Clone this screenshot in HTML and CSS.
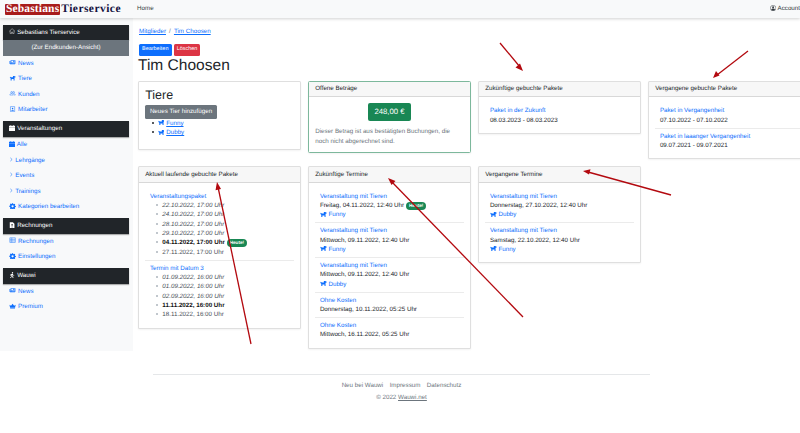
FILE: index.html
```html
<!DOCTYPE html>
<html lang="de">
<head>
<meta charset="utf-8">
<title>Tim Choosen</title>
<link rel="stylesheet" href="styles.css">
</head>
<body>
<svg class="defs" width="0" height="0" aria-hidden="true">
  <symbol id="dog" viewBox="0 0 16 16"><path d="M.8 5 2.100 4.200C2.600 5.600 3.400 6 5 6h4V2.500h4l.8 1.200h2v2l-2 1H13v7.300h-2.400v-3.500h-5V14H3V8.600C1.800 8 1 6.600.8 5Z"/></symbol>
  <symbol id="news" viewBox="0 0 16 16"><path d="M3 3h12.200v8.800a1.600 1.600 0 0 1-1.600 1.600H2a1.800 1.800 0 0 1-1.800-1.800V5.200h1.900V11a.45.45 0 0 0 .9 0Z"/><path fill="#f8f9fa" d="M4.800 4.600h4.500v3.200H4.800Zm5.800.2h3.300V6h-3.300Zm0 2h3.300V8h-3.300Zm-5.800 2.500h9.100v1.100H4.800Zm0 2h9.100v.9H4.800Z"/></symbol>
  <symbol id="people" viewBox="0 0 16 16"><g fill="none" stroke="currentColor" stroke-width="1.100"><circle cx="5.500" cy="6" r="2.200"/><circle cx="10.800" cy="6" r="2.200"/><path d="M1 13c.4-3 2-4 4.500-4s3.800 1 4 4Zm9-3.800c2.600-.4 4.600.9 5 3.800h-4"/></g></symbol>
  <symbol id="badge" viewBox="0 0 16 16"><path fill="none" stroke="currentColor" stroke-width="1.200" d="M2.600 1.600h10.800v12.800H2.600Z"/><circle cx="8" cy="6.500" r="2"/><path d="M4.500 12.400c.3-2 1.500-3 3.500-3s3.200 1 3.500 3Z"/></symbol>
  <symbol id="house" viewBox="0 0 16 16"><path fill="none" stroke="currentColor" stroke-width="1.100" d="M1 8.300 8 1.700l7 6.600M3 6.500v7.800h3.600v-4h2.800v4H13V6.500"/></symbol>
  <symbol id="cal" viewBox="0 0 16 16"><path d="M3.500.5h2V2h5V.5h2V2H16v3H0V2h3.500ZM0 6h16v8.500a1 1 0 0 1-1 1H1a1 1 0 0 1-1-1Z"/></symbol>
  <symbol id="chev" viewBox="0 0 16 16"><path fill="none" stroke="currentColor" stroke-width="2" d="m5 2 6.500 6L5 14"/></symbol>
  <symbol id="gear" viewBox="0 0 16 16"><path fill-rule="evenodd" d="M6.600.5h2.800l.4 2.100 1.300.6 1.800-1.200 2 2-1.200 1.800.6 1.300 2.100.4v2.800l-2.100.4-.6 1.300 1.200 1.800-2 2-1.800-1.200-1.300.6-.4 2.100H6.600l-.4-2.100-1.300-.6-1.800 1.200-2-2 1.200-1.800-.6-1.300L-.4 9.800V7l2.100-.4.6-1.300L1.100 3.500l2-2 1.800 1.200 1.300-.6ZM8 5.500a2.900 2.900 0 1 0 0 5.800 2.900 2.900 0 0 0 0-5.800Z"/></symbol>
  <symbol id="file" viewBox="0 0 16 16"><path fill-rule="evenodd" d="M2 .5h8l4 4v11H2Zm4 5.500h4v1.500H6Zm0 3h4v1.500H6Zm0 3h4v1.500H6Z"/></symbol>
  <symbol id="table" viewBox="0 0 16 16"><path fill="none" stroke="currentColor" stroke-width="1.200" d="M1 2h14v12H1Zm0 4h14M1 10h14M6 2v12"/></symbol>
  <symbol id="walk" viewBox="0 0 16 16"><circle cx="9" cy="2" r="1.800"/><path d="M7.400 4.400h2.900l.7 3 2.700 1.200-.6 1.300-3.300-1.400-.4-1.200-.6 2.900 2.400 2.300v3.200H9.200v-2.500L7 10.600l-.8 3.200-3 1.900-.8-1.300 2.500-1.600 1.300-6-1.400.6-.6 2.400-1.400-.3.800-3.200Z"/></symbol>
  <symbol id="crown" viewBox="0 0 16 16"><path d="M0 4.500 4 7.300 8 2l4 5.300 4-2.800-1.600 8H1.600ZM1.800 13.500h12.400V15H1.800Z"/></symbol>
  <symbol id="user" viewBox="0 0 16 16"><circle cx="8" cy="8" r="7.200" fill="none" stroke="currentColor" stroke-width="1.200"/><circle cx="8" cy="5.800" r="2.500"/><path d="M3.200 12.300c.6-2.200 2.400-3 4.800-3s4.200.8 4.800 3A6.500 6.500 0 0 1 8 14.500a6.500 6.500 0 0 1-4.800-2.200Z"/></symbol>
</svg>

<nav class="navbar">
  <div class="logo"><span class="logo-a">Sebastians</span><span class="logo-b">Tierservice</span></div>
  <a class="nav-home">Home</a>
  <a class="nav-account"><svg class="ic"><use href="#user"/></svg> Account</a>
</nav>

<div class="layout">
  <aside class="sidebar">
    <div class="side-head"><svg class="ic"><use href="#house"/></svg> Sebastians Tierservice</div>
    <div class="side-sub">(Zur Endkunden-Ansicht)</div>
    <a class="side-item"><svg class="ic wide"><use href="#news"/></svg> News</a>
    <a class="side-item"><svg class="ic wide"><use href="#dog"/></svg> Tiere</a>
    <a class="side-item"><svg class="ic wide"><use href="#people"/></svg> Kunden</a>
    <a class="side-item"><svg class="ic wide"><use href="#badge"/></svg> Mitarbeiter</a>

    <div class="side-head gap"><svg class="ic"><use href="#cal"/></svg> Veranstaltungen</div>
    <a class="side-item"><svg class="ic"><use href="#cal"/></svg> Alle</a>
    <a class="side-item"><svg class="ic chev"><use href="#chev"/></svg> Lehrgänge</a>
    <a class="side-item"><svg class="ic chev"><use href="#chev"/></svg> Events</a>
    <a class="side-item"><svg class="ic chev"><use href="#chev"/></svg> Trainings</a>
    <a class="side-item"><svg class="ic wide"><use href="#gear"/></svg> Kategorien bearbeiten</a>

    <div class="side-head gap"><svg class="ic"><use href="#file"/></svg> Rechnungen</div>
    <a class="side-item"><svg class="ic wide"><use href="#table"/></svg> Rechnungen</a>
    <a class="side-item"><svg class="ic wide"><use href="#gear"/></svg> Einstellungen</a>

    <div class="side-head gap"><svg class="ic"><use href="#walk"/></svg> Wauwi</div>
    <a class="side-item"><svg class="ic wide"><use href="#news"/></svg> News</a>
    <a class="side-item"><svg class="ic wide"><use href="#crown"/></svg> Premium</a>
  </aside>

  <main class="main">
    <div class="crumbs"><a class="u">Mitglieder</a><span class="sep">/</span><a class="u">Tim Choosen</a></div>
    <div class="actions"><a class="btn-sm blue">Bearbeiten</a><a class="btn-sm red">Löschen</a></div>
    <h1>Tim Choosen</h1>

    <div class="grid">
      <section class="card">
        <div class="card-body">
          <h2>Tiere</h2>
          <a class="btn-gray">Neues Tier hinzufügen</a>
          <ul class="pets">
            <li><a><svg class="ic dog"><use href="#dog"/></svg></a> <a class="u">Funny</a></li>
            <li><a><svg class="ic dog"><use href="#dog"/></svg></a> <a class="u">Dubby</a></li>
          </ul>
        </div>
      </section>

      <section class="card green">
        <div class="card-head">Offene Beträge</div>
        <div class="card-body">
          <div class="amount-wrap"><span class="amount">248,00 €</span></div>
          <p class="muted">Dieser Betrag ist aus bestätigten Buchungen, die noch nicht abgerechnet sind.</p>
        </div>
      </section>

      <section class="card">
        <div class="card-head">Zukünftige gebuchte Pakete</div>
        <div class="card-body">
          <div class="item"><a>Paket in der Zukunft</a><div>08.03.2023 - 08.03.2023</div></div>
        </div>
      </section>

      <section class="card">
        <div class="card-head">Vergangene gebuchte Pakete</div>
        <div class="card-body">
          <div class="item"><a>Paket in Vergangenheit</a><div>07.10.2022 - 07.10.2022</div></div>
          <div class="item"><a>Paket in laaanger Vergangenheit</a><div>09.07.2021 - 09.07.2021</div></div>
        </div>
      </section>

      <section class="card">
        <div class="card-head">Aktuell laufende gebuchte Pakete</div>
        <div class="card-body">
          <div class="item"><a>Veranstaltungspaket</a>
            <ul class="dates">
              <li><i>22.10.2022, 17:00 Uhr</i></li>
              <li><i>24.10.2022, 17:00 Uhr</i></li>
              <li><i>28.10.2022, 17:00 Uhr</i></li>
              <li><i>29.10.2022, 17:00 Uhr</i></li>
              <li><b>04.11.2022, 17:00 Uhr</b> <span class="pill">Heute!</span></li>
              <li>27.11.2022, 17:00 Uhr</li>
            </ul>
          </div>
          <div class="item"><a>Termin mit Datum 3</a>
            <ul class="dates">
              <li><i>01.09.2022, 16:00 Uhr</i></li>
              <li><i>01.09.2022, 16:00 Uhr</i></li>
              <li><i>02.09.2022, 16:00 Uhr</i></li>
              <li><b>11.11.2022, 16:00 Uhr</b></li>
              <li>18.11.2022, 16:00 Uhr</li>
            </ul>
          </div>
        </div>
      </section>

      <section class="card">
        <div class="card-head">Zukünftige Termine</div>
        <div class="card-body">
          <div class="item"><a>Veranstaltung mit Tieren</a><div>Freitag, 04.11.2022, 12:40 Uhr <span class="pill">Heute!</span></div><a><svg class="ic dog"><use href="#dog"/></svg> Funny</a></div>
          <div class="item"><a>Veranstaltung mit Tieren</a><div>Mittwoch, 09.11.2022, 12:40 Uhr</div><a><svg class="ic dog"><use href="#dog"/></svg> Funny</a></div>
          <div class="item"><a>Veranstaltung mit Tieren</a><div>Mittwoch, 09.11.2022, 12:40 Uhr</div><a><svg class="ic dog"><use href="#dog"/></svg> Dubby</a></div>
          <div class="item"><a>Ohne Kosten</a><div>Donnerstag, 10.11.2022, 05:25 Uhr</div></div>
          <div class="item"><a>Ohne Kosten</a><div>Mittwoch, 16.11.2022, 05:25 Uhr</div></div>
        </div>
      </section>

      <section class="card">
        <div class="card-head">Vergangene Termine</div>
        <div class="card-body">
          <div class="item"><a>Veranstaltung mit Tieren</a><div>Donnerstag, 27.10.2022, 12:40 Uhr</div><a><svg class="ic dog"><use href="#dog"/></svg> Dubby</a></div>
          <div class="item"><a>Veranstaltung mit Tieren</a><div>Samstag, 22.10.2022, 12:40 Uhr</div><a><svg class="ic dog"><use href="#dog"/></svg> Funny</a></div>
        </div>
      </section>
    </div>
  </main>
</div>

<footer class="footer">
  <div class="foot-links"><a>Neu bei Wauwi</a><a>Impressum</a><a>Datenschutz</a></div>
  <div class="foot-copy">© 2022 <a class="u">Wauwi.net</a></div>
</footer>

<svg class="arrows" viewBox="0 0 800 433" aria-hidden="true">
  <g stroke="#b3090f" stroke-width="1.300" fill="none">
    <path d="M500 43 520 67"/>
    <path d="M748 51 717 75"/>
    <path d="M251 344 218 187"/>
    <path d="M523 317 391 181"/>
    <path d="M671 195 588 172"/>
  </g>
  <g fill="#b3090f">
    <path d="m523 71-7.500-3.500 4.500-4Z"/>
    <path d="m713 78 3-7 3.500 4.500Z"/>
    <path d="m217 182 4 7-5.500 1.200Z"/>
    <path d="m388 178 7.500 3-4 4Z"/>
    <path d="m583 171 7.500-1.800-1.500 5.300Z"/>
  </g>
</svg>
</body>
</html>
```
FILE: styles.css
```css
html { font-size: 6.22px; }
* { box-sizing: border-box; }
body {
  margin: 0;
  position: relative;
  width: 800px;
  height: 433px;
  overflow: hidden;
  background: #fff;
  color: #212529;
  font-family: "Liberation Sans", Arial, sans-serif;
  font-size: 1rem;
  line-height: 1.5;
  text-rendering: geometricPrecision;
}
a { color: #0d6efd; text-decoration: none; }
a.u { text-decoration: underline; }
.defs { position: absolute; }
.ic {
  display: inline-block;
  width: 1em;
  height: 1em;
  fill: currentColor;
  vertical-align: -0.125em;
}
.ic.dog { width: 1.100em; height: 1.100em; vertical-align: -0.180em; }

.navbar {
  height: 18px;
  display: flex;
  align-items: center;
  background: #f8f9fa;
  box-shadow: 0 1px 3px rgba(0, 0, 0, .18);
  position: relative;
  padding-left: 5px;
}
.logo {
  display: flex;
  align-items: center;
  width: 132px;
  font-family: "Liberation Serif", serif;
  font-weight: 700;
  font-size: 11.500px;
  line-height: 11px;
}
.logo-a { background: #a81c1c; color: #fff; padding: 0 1px; border-radius: 1px; letter-spacing: .15px; }
.logo-b { color: #14123f; margin-left: 1px; letter-spacing: .45px; }
.nav-home { color: #343a40; }
.nav-account { margin-left: auto; color: #343a40; white-space: nowrap; }

.layout { display: flex; height: 333px; }
.sidebar {
  width: 133px;
  flex: none;
  background: #f8f9fa;
  padding: 6.700px 4px 0 3px;
}
.side-head {
  height: 15.550px;
  line-height: 15.550px;
  padding-left: 1rem;
  background: #212529;
  color: #fff;
  box-shadow: 0 1px 1px rgba(0, 0, 0, .3);
}
.side-head.gap { margin-top: 3.500px; }
.side-sub {
  height: 15.550px;
  line-height: 15.550px;
  text-align: center;
  background: #6c757d;
  color: #fff;
}
.side-item {
  display: block;
  height: 15.550px;
  line-height: 15.550px;
  padding-left: 1rem;
}
.ic.wide { width: 1.150em; }
.ic.chev { width: .7em; height: .8em; vertical-align: -0.03em; }

.main { flex: 1; min-width: 0; padding: 9px 0 0 5px; }
.crumbs { height: 9.330px; margin-left: 1px; }
.sep { color: #6c757d; margin: 0 .5rem; }
.actions { display: flex; gap: 2px; margin: 7.500px 0 0 1px; }
.btn-sm {
  font-size: .875rem;
  line-height: 1.5;
  padding: .25rem .5rem;
  border-radius: 1.500px;
  color: #fff;
  height: 12px;
}
.blue { background: #0d6efd; }
.red { background: #dc3545; }
h1 {
  margin: 0;
  font-size: 2.500rem;
  font-weight: 400;
  line-height: 1.200;
  padding: 1px 0 0;
  height: 25px;
}
h2 {
  margin: 0 0 2px;
  font-size: 2rem;
  font-weight: 400;
  line-height: 1.200;
}
.grid {
  display: grid;
  grid-template-columns: repeat(4, 163px);
  gap: 7px;
  align-items: start;
}
.card {
  background: #fff;
  border: 1px solid rgba(0, 0, 0, .125);
  border-radius: 1.500px;
  box-shadow: 0 1px 2px rgba(0, 0, 0, .05);
}
.card.green { border-color: #7db89c; }
.card-head {
  padding: 2.500px 1rem;
  background: rgba(0, 0, 0, .03);
  border-bottom: 1px solid rgba(0, 0, 0, .125);
}
.card-body { padding: 1rem 1rem 5.200px; }
.btn-gray {
  display: inline-block;
  background: #6c757d;
  color: #fff;
  padding: .375rem .75rem;
  border-radius: 1.500px;
}
.pets { margin: 0 0 6.500px; padding-left: 2rem; list-style: none; }
.amount-wrap { text-align: center; margin-bottom: 1rem; }
.amount {
  display: inline-block;
  background: #198754;
  color: #fff;
  font-size: 1.250rem;
  line-height: 1.500;
  padding: .500rem 1.100rem;
  border-radius: 2px;
}
.muted { margin: 0 0 1px; color: #6c757d; }
.item { padding: 2.850px .75rem; }
.item + .item { border-top: 1px solid rgba(0, 0, 0, .08); }
.dates { margin: 0; padding-left: 2rem; color: #495057; list-style: none; }
.dates li::before, .pets li::before {
  content: "";
  display: inline-block;
  width: 2px;
  height: 2px;
  margin-left: -6px;
  margin-right: 4px;
  border-radius: 50%;
  vertical-align: .15em;
  background: #adb5bd;
}
.pets li::before { background: #212529; }
.dates b { color: #111; }
.pill {
  display: inline-block;
  background: #198754;
  color: #fff;
  font-size: .75em;
  font-weight: 700;
  line-height: 1;
  padding: .35em .65em;
  border-radius: 50rem;
  vertical-align: .05em;
}

.footer {
  width: 497px;
  margin: 23px 0 0 153px;
  border-top: 1px solid #e5e7e9;
  padding-top: 6px;
  text-align: center;
  color: #6c757d;
}
.foot-links { display: flex; justify-content: center; gap: 1.030rem; }
.foot-links a { color: #6c757d; }
.foot-copy { margin-top: 3px; }
.foot-copy a { color: #6c757d; }

.arrows {
  position: absolute;
  left: 0;
  top: 0;
  width: 800px;
  height: 433px;
  pointer-events: none;
}
```
